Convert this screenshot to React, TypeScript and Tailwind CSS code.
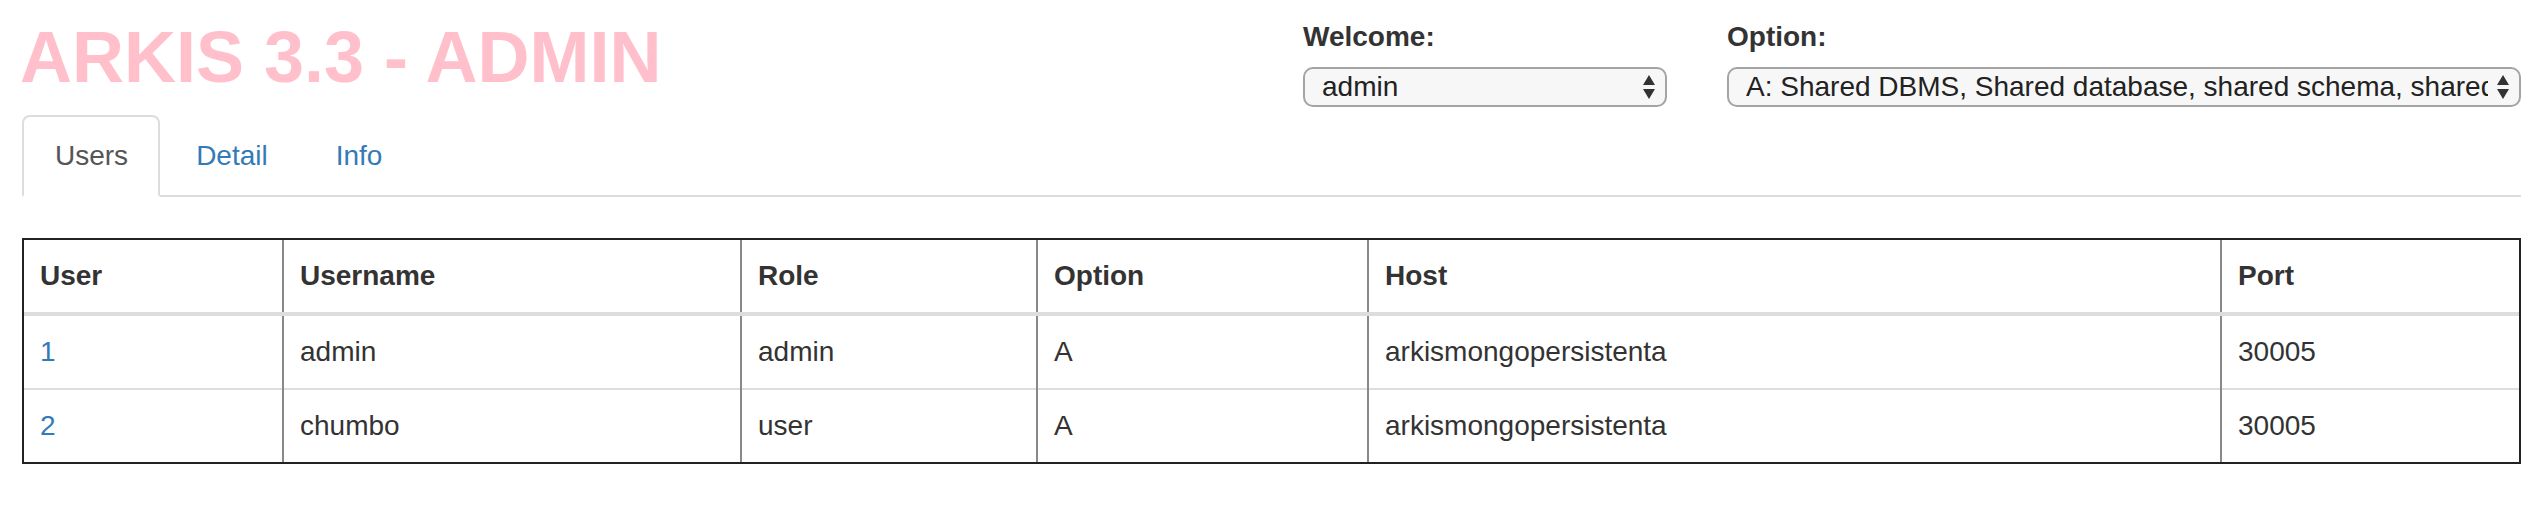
const users = [
  { id: 1, username: 'admin', role: 'admin', option: 'A', host: 'arkismongopersistenta', port: 30005 },
  { id: 2, username: 'chumbo', role: 'user', option: 'A', host: 'arkismongopersistenta', port: 30005 },
];

function SelectArrows() {
  return (
    <svg width="14" height="26" viewBox="0 0 14 26" className="shrink-0">
      <path d="M7 1 L13 11 L1 11 Z" fill="#333" />
      <path d="M7 25 L13 15 L1 15 Z" fill="#333" />
    </svg>
  );
}

function FakeSelect({ value, width }: { value: string; width: string }) {
  return (
    <div
      className={`${width} h-[40px] flex items-center gap-2 pl-[17px] pr-[9px] border-2 border-[#a4a4a4] rounded-[10px] bg-[#f7f7f7] text-[28px] text-[#222]`}
    >
      <span className="flex-1 overflow-hidden whitespace-nowrap leading-[36px]">{value}</span>
      <SelectArrows />
    </div>
  );
}

export default function App() {
  return (
    <div className="w-[2538px] h-[510px] bg-white font-['Liberation_Sans',Arial,sans-serif] text-[28px] text-[#333]">
      <div className="ml-[22px] w-[2499px]">
        {/* Header: title + selects */}
        <div className="flex h-[115px]">
          <h1 className="flex-1 mt-[18px] -ml-[2px] text-[72px] leading-[79px] font-bold text-[pink]">
            ARKIS 3.3 - ADMIN
          </h1>
          <div className="flex gap-[60px] pt-[17px]">
            <div className="w-[364px]">
              <div className="font-bold leading-[40px] mb-[10px]">Welcome:</div>
              <FakeSelect value="admin" width="w-[364px]" />
            </div>
            <div className="w-[794px]">
              <div className="font-bold leading-[40px] mb-[10px]">Option:</div>
              <FakeSelect
                value="A: Shared DBMS, Shared database, shared schema, shared collection"
                width="w-[794px]"
              />
            </div>
          </div>
        </div>

        {/* Tabs */}
        <ul className="flex border-b-2 border-[#ddd]">
          <li className="mb-[-2px] mr-[4px]">
            <span className="block pl-[31px] pr-[30px] py-[19px] leading-[40px] border-2 border-[#ddd] border-b-white rounded-t-[8px] bg-white text-[#555]">
              Users
            </span>
          </li>
          <li className="mb-[-2px] mr-[4px]">
            <span className="block px-[30px] py-[19px] leading-[40px] border-2 border-transparent text-[#337ab7]">
              Detail
            </span>
          </li>
          <li className="mb-[-2px] mr-[4px]">
            <span className="block px-[30px] py-[19px] leading-[40px] border-2 border-transparent text-[#337ab7]">
              Info
            </span>
          </li>
        </ul>

        {/* Users table */}
        <div className="mt-[41px] border-2 border-[#222]">
          <table className="w-full table-fixed border-collapse">
            <colgroup>
              <col className="w-[259px]" />
              <col className="w-[458px]" />
              <col className="w-[296px]" />
              <col className="w-[331px]" />
              <col className="w-[853px]" />
              <col />
            </colgroup>
            <thead>
              <tr>
                {['User', 'Username', 'Role', 'Option', 'Host', 'Port'].map((h) => (
                  <th
                    key={h}
                    className="p-[16px] leading-[40px] text-left font-bold border-b-4 border-b-[#ddd] border-l-2 border-l-[#888] first:border-l-0"
                  >
                    {h}
                  </th>
                ))}
              </tr>
            </thead>
            <tbody>
              {users.map((u) => (
                <tr key={u.id}>
                  <td className="p-[16px] leading-[40px] border-t-2 border-t-[#ddd] text-[#337ab7]">{u.id}</td>
                  <td className="p-[16px] leading-[40px] border-t-2 border-t-[#ddd] border-l-2 border-l-[#888]">{u.username}</td>
                  <td className="p-[16px] leading-[40px] border-t-2 border-t-[#ddd] border-l-2 border-l-[#888]">{u.role}</td>
                  <td className="p-[16px] leading-[40px] border-t-2 border-t-[#ddd] border-l-2 border-l-[#888]">{u.option}</td>
                  <td className="p-[16px] leading-[40px] border-t-2 border-t-[#ddd] border-l-2 border-l-[#888]">{u.host}</td>
                  <td className="p-[16px] leading-[40px] border-t-2 border-t-[#ddd] border-l-2 border-l-[#888]">{u.port}</td>
                </tr>
              ))}
            </tbody>
          </table>
        </div>
      </div>
    </div>
  );
}
